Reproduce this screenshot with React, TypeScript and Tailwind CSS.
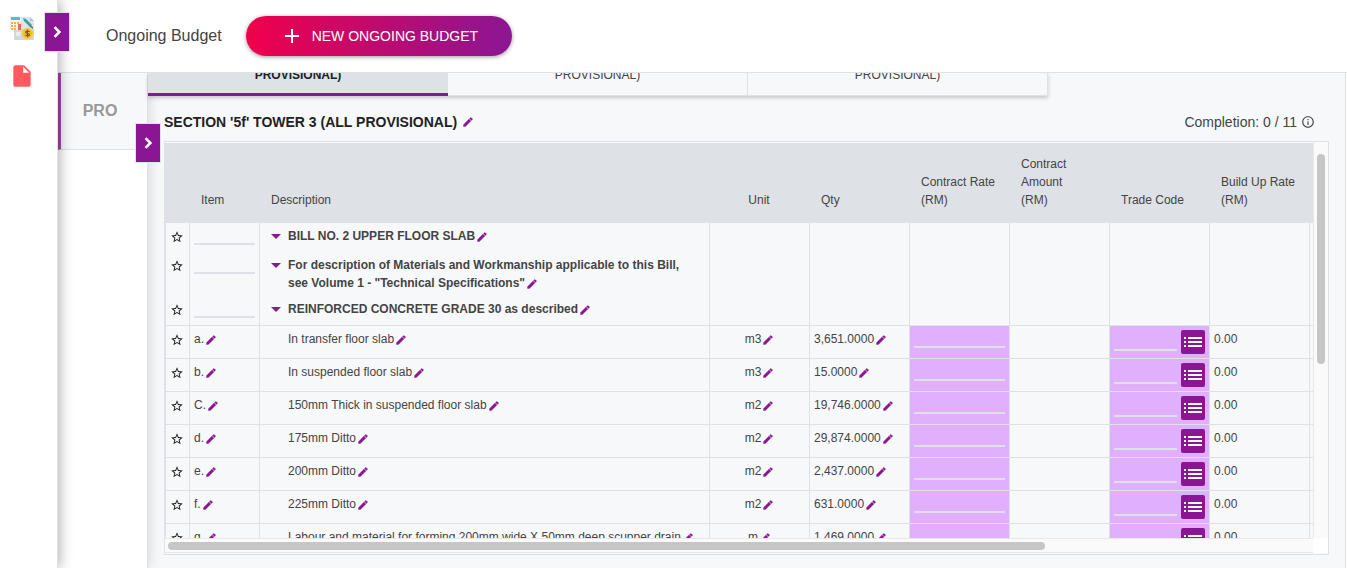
import React from "react";
import { MdAdd, MdStarBorder, MdList, MdInfoOutline, MdInsertDriveFile, MdArrowDropDown } from "react-icons/md";

type Row = { item: string; text: string; unit: string; qty: string };

const headings = [
  "BILL NO. 2 UPPER FLOOR SLAB",
  'For description of Materials and Workmanship applicable to this Bill, see Volume 1 - "Technical Specifications"',
  "REINFORCED CONCRETE GRADE 30 as described",
];

const rows: Row[] = [
  { item: "a.", text: "In transfer floor slab", unit: "m3", qty: "3,651.0000" },
  { item: "b.", text: "In suspended floor slab", unit: "m3", qty: "15.0000" },
  { item: "C.", text: "150mm Thick in suspended floor slab", unit: "m2", qty: "19,746.0000" },
  { item: "d.", text: "175mm Ditto", unit: "m2", qty: "29,874.0000" },
  { item: "e.", text: "200mm Ditto", unit: "m2", qty: "2,437.0000" },
  { item: "f.", text: "225mm Ditto", unit: "m2", qty: "631.0000" },
  { item: "g.", text: "Labour and material for forming 200mm wide X 50mm deep scupper drain", unit: "m", qty: "1,469.0000" },
];

function EditButton({ label }: { label: string }) {
  return (
    <button type="button" aria-label={label} className="ml-px inline-block align-middle text-[#8b1694]">
      <svg viewBox="0 0 24 24" className="size-3" fill="currentColor" stroke="currentColor" strokeWidth="0.8" aria-hidden="true">
        <path d="M3 17.250V21h3.750L17.810 9.940l-3.750-3.750L3 17.250z" />
        <path d="M20.710 7.040a1 1 0 0 0 0-1.410l-2.340-2.340a1 1 0 0 0-1.410 0l-1.830 1.830 3.750 3.750 1.830-1.830z" />
      </svg>
    </button>
  );
}

function StarButton() {
  return (
    <button type="button" aria-label="Mark as favourite" className="mt-[7px] ml-1 block text-[#222]">
      <MdStarBorder className="size-3.5" />
    </button>
  );
}

function LineInput({ label, className }: { label: string; className: string }) {
  return (
    <input
      type="text"
      aria-label={label}
      className={`block min-w-0 border-b-2 border-[#dee1e6] bg-transparent outline-none ${className}`}
    />
  );
}

function ExpandTab({ label, className }: { label: string; className: string }) {
  return (
    <button
      type="button"
      aria-label={label}
      className={`absolute z-30 flex h-10 w-[26px] items-center justify-center border border-[#dee1e6] bg-[#8b1694] text-white ${className}`}
    >
      <svg viewBox="0 0 24 24" className="size-[22px] shrink-0" fill="none" stroke="currentColor" strokeWidth="2.800" aria-hidden="true">
        <path d="M9.300 6.700L14.600 12l-5.300 5.300" />
      </svg>
    </button>
  );
}

function BudgetIcon() {
  return (
    <svg viewBox="0 0 24 24" className="size-6" aria-hidden="true">
      <path d="M11 1h9l4 4v15H11z" fill="#dfe5e8" />
      <path d="M20 1l4 4h-4z" fill="#b8c4c9" />
      <path d="M4 13h20v12H4z" fill="#cfd8dc" />
      <path d="M0 0h11v14H0z" fill="#f3f3f3" />
      <path d="M1 1h9v3H1z" fill="#52b9e9" />
      <path d="M1 6h2v2H1zM4 6h2v2H4zM7 6h2v2H7zM1 9h2v2H1zM4 9h2v2H4zM1 12h2v2H1zM4 12h2v2H4z" fill="#f9b233" />
      <path d="M8 8h3v6H8z" fill="#ef6a4c" />
      <path d="M13 2l3 1 6 6-2 2-6-6z" fill="#35a5a0" />
      <path d="M19 8l4 3v2l-3-2z" fill="#607d8b" />
      <path d="M6 17h5M6 19h4" stroke="#fff" strokeWidth="1" />
      <circle cx="17.500" cy="17.500" r="5.800" fill="#fdc93a" />
      <circle cx="17.500" cy="17.500" r="4.300" fill="#f9b826" />
      <path d="M19.500 15.700c-.5-.8-3.800-1-3.800.5 0 1.600 3.800.9 3.800 2.600 0 1.500-3.500 1.300-4 .3M17.500 13.700v7.600" fill="none" stroke="#7a4a68" strokeWidth="1.100" />
    </svg>
  );
}

const groupCell = "border-l border-[#dee1e6] p-0 align-top";
const head = "px-3 pb-[14px] align-bottom font-normal";

export default function App() {
  return (
    <div className="flex h-screen overflow-hidden bg-white font-['Liberation_Sans',Arial,sans-serif] text-[#444]">
      <aside className="relative z-20 flex w-[58px] shrink-0 flex-col border-r border-[#dee1e6] bg-white shadow-[2px_0_12px_rgba(0,0,0,0.3)]">
        <nav className="flex flex-col gap-[23px] pt-4 pl-[10px]">
          <a href="#budget" aria-label="Budget"><BudgetIcon /></a>
          <a href="#documents" aria-label="Documents" className="text-[#ff5a5f]">
            <MdInsertDriveFile className="-ml-px size-[26px]" />
          </a>
        </nav>
        <ExpandTab label="Expand menu" className="top-3 left-11" />
      </aside>

      <div className="flex min-w-0 flex-1 flex-col">
        <header className="flex h-[72px] shrink-0 items-center gap-6 pl-12">
          <h1 className="text-base">Ongoing Budget</h1>
          <button
            type="button"
            className="flex h-10 items-center gap-2 rounded-full bg-linear-to-r/srgb from-[#f0004b] to-[#8b1694] px-[34px] text-sm text-white shadow-[0_1px_4px_rgba(0,0,0,0.4)]"
          >
            <MdAdd className="size-6" />
            NEW ONGOING BUDGET
          </button>
        </header>

        <div className="flex min-h-0 flex-1 overflow-hidden border-t border-[#dee1e6]">
          <div className="relative z-10 w-[90px] shrink-0 border-r border-[#dee1e6] bg-white shadow-[2px_0_12px_rgba(0,0,0,0.12)]">
            <button type="button" className="flex h-[77px] w-full items-center justify-center border-b border-l-3 border-b-[#dee1e6] border-l-[#9b4ba3] bg-[#f7f8fa] pr-2 text-base font-bold text-[#999]">
              PRO
            </button>
            <ExpandTab label="Expand sections" className="top-[50px] left-[77px]" />
          </div>

          <main className="mr-px flex min-w-0 flex-1 flex-col border-r border-[#dee1e6] bg-[#f7f8fa]">
            <div role="tablist" className="relative z-10 grid h-[23px] w-[900px] shrink-0 grid-cols-3 bg-[#f7f8fa] text-xs leading-3 shadow-[0_2px_4px_rgba(0,0,0,0.2)]">
              <button type="button" role="tab" aria-selected="true" className="flex items-start justify-center border-b-3 border-[#8b1694] bg-[#dee1e6] font-bold text-[#222]">
                <span className="-mt-1">PROVISIONAL)</span>
              </button>
              <button type="button" role="tab" aria-selected="false" className="flex items-start justify-center border-r border-b border-[#dee1e6]">
                <span className="-mt-1">PROVISIONAL)</span>
              </button>
              <button type="button" role="tab" aria-selected="false" className="flex items-start justify-center border-r border-b border-[#dee1e6]">
                <span className="-mt-1">PROVISIONAL)</span>
              </button>
            </div>

            <section className="flex min-h-0 flex-1 flex-col px-4 pb-[13px]">
              <div className="flex h-[45px] shrink-0 items-center justify-between pt-[7px] pr-[14px] text-sm">
                <h2 className="flex items-center gap-1 font-bold text-[#222]">
                  SECTION '5f' TOWER 3 (ALL PROVISIONAL)
                  <EditButton label="Edit section title" />
                </h2>
                <p className="flex items-center gap-1">
                  Completion: 0 / 11
                  <MdInfoOutline className="size-3.5" />
                </p>
              </div>

              <div className="flex min-h-0 flex-1 flex-col border border-[#dee1e6]">
                <div className="flex min-h-0 flex-1">
                  <div className="min-w-0 flex-1 overflow-hidden pt-px">
                    <table className="w-[1545px] table-fixed border-separate border-spacing-0 text-left text-xs leading-[18px]">
                      <colgroup>
                        <col className="w-6" />
                        <col className="w-[70px]" />
                        <col className="w-[450px]" />
                        <col className="w-[100px]" />
                        <col className="w-[100px]" />
                        <col className="w-[100px]" />
                        <col className="w-[100px]" />
                        <col className="w-[100px]" />
                        <col className="w-[100px]" />
                        <col />
                      </colgroup>
                      <thead className="bg-[#dee1e6]">
                        <tr className="h-20">
                          <th className={head}></th>
                          <th className={head}>Item</th>
                          <th className={head}>Description</th>
                          <th className={`${head} text-center`}>Unit</th>
                          <th className={head}>Qty</th>
                          <th className={head}>Contract Rate (RM)</th>
                          <th className={head}>Contract Amount<br />(RM)</th>
                          <th className={head}>Trade Code</th>
                          <th className={head}>Build Up Rate (RM)</th>
                          <th className={head}></th>
                        </tr>
                      </thead>
                      <tbody>
                        {headings.map((text) => (
                          <tr key={text} className="h-[29px]">
                            <td className={groupCell}><StarButton /></td>
                            <td className={groupCell}><LineInput label="Item" className="mx-1 h-[22px] w-[61px]" /></td>
                            <td className={groupCell}>
                              <div className="flex items-start gap-1 py-1 pl-[10px] font-bold">
                                <button type="button" aria-label="Collapse" className="h-[18px] w-[14px] shrink-0 text-[#8b1694]">
                                  <MdArrowDropDown className="-mt-[3px] -ml-[6px] size-6" />
                                </button>
                                <p className="max-w-[410px]">
                                  {text}
                                  <EditButton label="Edit description" />
                                </p>
                              </div>
                            </td>
                            <td className={groupCell}></td>
                            <td className={groupCell}></td>
                            <td className={groupCell}></td>
                            <td className={groupCell}></td>
                            <td className={groupCell}></td>
                            <td className={groupCell}></td>
                            <td className={groupCell}></td>
                          </tr>
                        ))}
                        {rows.map((row) => (
                          <tr key={row.item} className="h-[33px]">
                            <td className="border-t border-l border-[#dee1e6] p-0 align-top"><StarButton /></td>
                            <td className="border-t border-l border-[#dee1e6] px-1 py-1 align-top">
                              {row.item}<EditButton label="Edit item" />
                            </td>
                            <td className="border-t border-l border-[#dee1e6] py-1 pl-7 align-top whitespace-nowrap">
                              {row.text}<EditButton label="Edit description" />
                            </td>
                            <td className="border-t border-l border-[#dee1e6] py-1 text-center align-top">
                              {row.unit}<EditButton label="Edit unit" />
                            </td>
                            <td className="border-t border-l border-[#dee1e6] px-1 py-1 align-top whitespace-nowrap">
                              {row.qty}<EditButton label="Edit quantity" />
                            </td>
                            <td className="border-t border-l border-[#dee1e6] bg-[#e0b0ff] p-0 align-top">
                              <LineInput label="Contract rate" className="mx-1 h-[22px] w-[91px]" />
                            </td>
                            <td className="border-t border-l border-[#dee1e6]"></td>
                            <td className="border-t border-l border-[#dee1e6] bg-[#e0b0ff] p-0 align-top">
                              <div className="flex gap-1 px-1">
                                <LineInput label="Trade code" className="h-[25px] w-full" />
                                <button type="button" aria-label="Choose trade code" className="mt-1 flex size-6 shrink-0 items-center justify-center rounded-xs bg-[#8b1694] text-white">
                                  <MdList className="size-6" />
                                </button>
                              </div>
                            </td>
                            <td className="border-t border-l border-[#dee1e6] px-1 py-1 align-top">0.00</td>
                            <td className="border-t border-l border-[#dee1e6]"></td>
                          </tr>
                        ))}
                      </tbody>
                    </table>
                  </div>
                  <div className="w-[15px] shrink-0 border-l border-[#e8e8e8] bg-[#fafafa] px-[3px] pt-3">
                    <div className="h-[210px] w-2 rounded-full bg-[#c6c6c6]" />
                  </div>
                </div>
                <div className="flex h-4 shrink-0 pb-px">
                  <div className="min-w-0 flex-1 border-y border-[#e8e8e8] bg-[#fafafa] px-[3px] pt-[3px]">
                    <div className="h-2 w-[877px] rounded-full bg-[#c6c6c6]" />
                  </div>
                  <div className="w-[15px] bg-white" />
                </div>
              </div>
            </section>
          </main>
        </div>
      </div>
    </div>
  );
}
